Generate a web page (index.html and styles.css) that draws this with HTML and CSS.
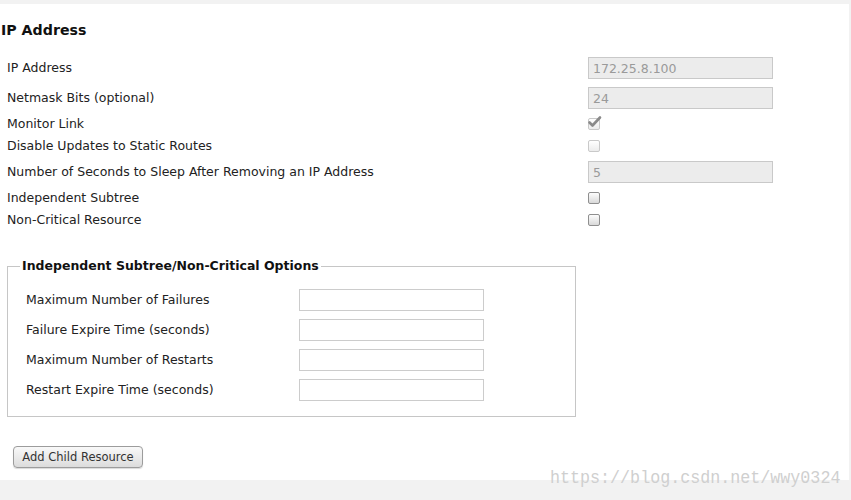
FILE: index.html
```html
<!DOCTYPE html>
<html lang="en">
<head>
    <meta charset="UTF-8">
    <title>IP Address</title>
    <link rel="stylesheet" href="styles.css">
</head>
<body>
    <div class="panel">
        <h2 class="title">IP Address</h2>

        <div class="props">
            <div class="row tall">
                <label>IP Address</label>
                <input type="text" class="field" value="172.25.8.100" disabled>
            </div>
            <div class="row tall">
                <label>Netmask Bits (optional)</label>
                <input type="text" class="field" value="24" disabled>
            </div>
            <div class="row">
                <label>Monitor Link</label>
                <span class="cb-wrap">
                    <input type="checkbox" class="cb" checked disabled>
                    <svg class="tick" width="16" height="14" viewBox="0 0 16 14">
                        <path d="M2.5 7.5 L5.5 10.5 L13 2.5" fill="none" stroke="#8a8a8a" stroke-width="2.6" stroke-linecap="round" stroke-linejoin="round"/>
                    </svg>
                </span>
            </div>
            <div class="row">
                <label>Disable Updates to Static Routes</label>
                <span class="cb-wrap"><input type="checkbox" class="cb" disabled></span>
            </div>
            <div class="row tall">
                <label>Number of Seconds to Sleep After Removing an IP Address</label>
                <input type="text" class="field" value="5" disabled>
            </div>
            <div class="row">
                <label>Independent Subtree</label>
                <span class="cb-wrap"><input type="checkbox" class="cb"></span>
            </div>
            <div class="row">
                <label>Non-Critical Resource</label>
                <span class="cb-wrap"><input type="checkbox" class="cb"></span>
            </div>
        </div>

        <fieldset class="options">
            <legend>Independent Subtree/Non-Critical Options</legend>
            <div class="opt-row">
                <label>Maximum Number of Failures</label>
                <input type="text" class="opt-field">
            </div>
            <div class="opt-row">
                <label>Failure Expire Time (seconds)</label>
                <input type="text" class="opt-field">
            </div>
            <div class="opt-row">
                <label>Maximum Number of Restarts</label>
                <input type="text" class="opt-field">
            </div>
            <div class="opt-row">
                <label>Restart Expire Time (seconds)</label>
                <input type="text" class="opt-field">
            </div>
        </fieldset>

        <button class="btn">Add Child Resource</button>
    </div>

    <div class="watermark">https://blog.csdn.net/wwy0324</div>
</body>
</html>
```

FILE: styles.css
```css
/* Reset */
* {
    box-sizing: border-box;
}

body {
    margin: 0;
    background-color: #f2f2f2;
    font-family: "DejaVu Sans", Verdana, sans-serif;
    font-size: 12.5px;
    color: #222;
    position: relative;
    height: 500px;
    overflow: hidden;
}

/* White content panel */
.panel {
    background-color: #fff;
    margin: 4px 2px 0 0;
    height: 476px;
    padding-top: 18px;
}

.title {
    margin: 0 0 14px 1px;
    font-size: 14.2px;
    line-height: 17px;
    font-weight: bold;
    color: #111;
}

/* Resource properties */
.props {
    padding-left: 7px;
}

.row {
    display: grid;
    grid-template-columns: 581px 185px;
    align-items: center;
    height: 22px;
}

.row.tall {
    height: 30px;
}

.row label,
.opt-row label {
    padding-bottom: 2px;
}

.field {
    width: 185px;
    height: 22px;
    border: 1px solid #c9c9c9;
    background-color: #ececec;
    color: #9a9a9a;
    font-family: inherit;
    font-size: 12.5px;
    padding: 0 4px;
    margin: 0;
}

.cb-wrap {
    position: relative;
    width: 12px;
    height: 12px;
}

.cb {
    appearance: none;
    -webkit-appearance: none;
    display: block;
    width: 12px;
    height: 12px;
    margin: 0;
    border: 1px solid #8f8f8f;
    border-radius: 2px;
    background: linear-gradient(#fdfdfd, #d9d9d9);
}

.cb:disabled {
    border-color: #c9c9c9;
    background: linear-gradient(#ffffff, #ececec);
}

.tick {
    position: absolute;
    left: -1px;
    top: -3px;
}

/* Fieldset of options */
.options {
    margin: 27px 0 0 7px;
    width: 569px;
    border: 1px solid #c6c6c6;
    padding: 11px 12px 11px 12px;
}

.options legend {
    padding: 0 2px;
    font-weight: bold;
    font-size: 12.5px;
    line-height: 16px;
    color: #111;
}

.opt-row {
    display: grid;
    grid-template-columns: 273px 185px;
    align-items: center;
    height: 30px;
    padding-left: 6px;
}

.opt-field {
    width: 185px;
    height: 22px;
    border: 1px solid #cccccc;
    background-color: #fff;
    margin: 0;
    font-family: inherit;
}

/* Button */
.btn {
    margin: 29px 0 0 13px;
    width: 130px;
    height: 22px;
    padding: 0;
    border: 1px solid #9c9c9c;
    border-radius: 4px;
    background: linear-gradient(#f9f9f9, #dcdcdc);
    box-shadow: 0 1px 1px rgba(0, 0, 0, 0.15);
    font-family: inherit;
    font-size: 11.5px;
    color: #333;
}

/* Blog watermark on top of the shot */
.watermark {
    position: absolute;
    left: 550px;
    top: 467px;
    font-family: "Liberation Mono", monospace;
    font-size: 16.7px;
    color: #cfcfcf;
    white-space: nowrap;
    transform: scaleY(1.15);
    transform-origin: top left;
}
```
